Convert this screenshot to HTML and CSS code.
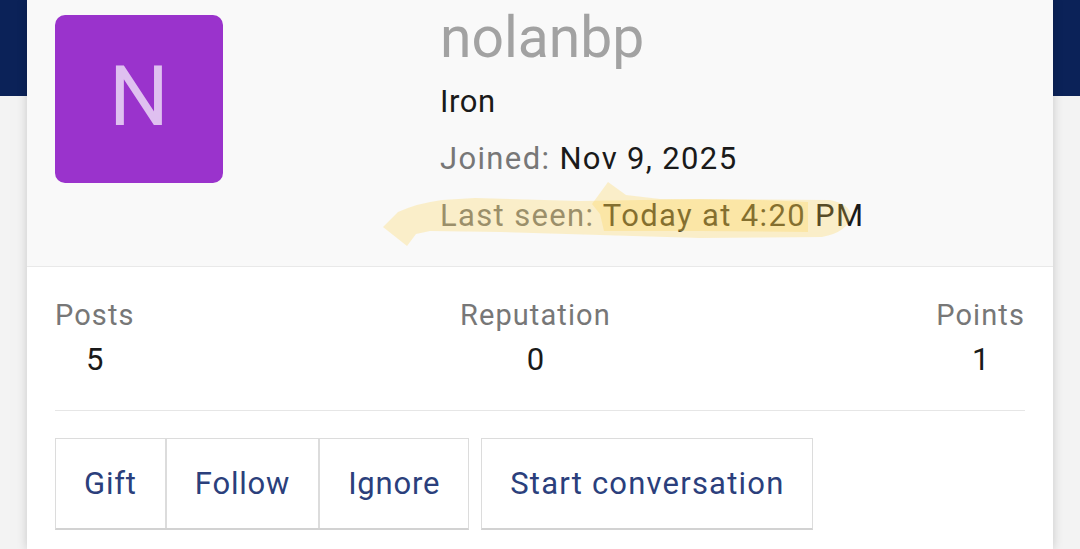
FILE: index.html
```html
<!DOCTYPE html>
<html lang="en">
<head>
<meta charset="utf-8">
<title>nolanbp</title>
<link rel="stylesheet" href="styles.css">
</head>
<body>
<div class="page">
  <div class="card">
    <div class="head">
      <div class="avatar">N</div>
      <div class="info">
        <div class="username">nolanbp</div>
        <div class="line title">Iron</div>
        <div class="line"><span class="label">Joined:</span> <span class="value">Nov 9, 2025</span></div>
        <div class="line"><span class="label">Last seen:</span> <span class="value">Today at 4:20 PM</span></div>
      </div>
    </div>
    <div class="body">
      <div class="stats">
        <div class="stat"><div class="stat-label">Posts</div><div class="stat-value">5</div></div>
        <div class="stat"><div class="stat-label">Reputation</div><div class="stat-value">0</div></div>
        <div class="stat"><div class="stat-label">Points</div><div class="stat-value">1</div></div>
      </div>
      <div class="actions">
        <div class="group">
          <a class="btn">Gift</a>
          <a class="btn">Follow</a>
          <a class="btn">Ignore</a>
        </div>
        <div class="group">
          <a class="btn btn-wide">Start conversation</a>
        </div>
      </div>
    </div>
  </div>
  <svg class="marker" width="1080" height="549" viewBox="0 0 1080 549" aria-hidden="true">
    <path d="M383,227 L398,212 Q418,203 442,200 L475,198 L580,201 L700,199 L830,200 Q850,204 851,216 Q848,232 822,237 L700,238 L600,235 L500,232 L430,231 L416,234 L407,246 Z"/>
    <path d="M608,182 L626,195 L660,199 L760,200 L808,202 L808,232 L700,231 L604,231 L600,214 L592,204 Z"/>
  </svg>
</div>
</body>
</html>
```
FILE: styles.css
```css
html, body {
  margin: 0;
  padding: 0;
}
body {
  width: 1080px;
  height: 549px;
  overflow: hidden;
  font-family: Roboto, "Liberation Sans", sans-serif;
  background: linear-gradient(#0b2258 0, #0b2258 96px, #f3f3f3 96px, #f3f3f3 100%);
}
.page {
  position: relative;
  height: 549px;
}
.card {
  margin: 0 27px;
  height: 549px;
  background: #ffffff;
  box-shadow: 0 0 10px rgba(0, 0, 0, 0.18);
}
.head {
  display: grid;
  grid-template-columns: 168px 1fr;
  column-gap: 217px;
  padding: 0 28px 22px 28px;
  background: #f9f9f9;
  border-bottom: 1px solid #e9e9e9;
}
.avatar {
  margin-top: 15px;
  width: 168px;
  height: 168px;
  border-radius: 10px;
  background: #9a33cc;
  color: #dfc0f0;
  font-size: 84px;
  line-height: 164px;
  text-align: center;
}
.info {
  padding-top: 3px;
}
.username {
  font-size: 57px;
  line-height: 70px;
  color: #a2a2a2;
}
.line {
  font-size: 31px;
  line-height: 57px;
  letter-spacing: 1.35px;
  color: #1a1a1a;
}
.title {
  letter-spacing: 0.6px;
}
.label {
  color: #777777;
}
.value {
  color: #1a1a1a;
}
.body {
  padding: 0 28px;
}
.stats {
  display: flex;
  justify-content: space-between;
  padding: 28px 0 25px;
  border-bottom: 1px solid #e6e6e6;
}
.stat {
  text-align: center;
}
.stat-label {
  font-size: 29px;
  line-height: 40px;
  letter-spacing: 1.1px;
  color: #777777;
}
.stat-value {
  font-size: 31px;
  line-height: 50px;
  color: #1a1a1a;
}
.actions {
  display: flex;
  gap: 12px;
  margin-top: 27px;
}
.group {
  display: flex;
  border: 1px solid #dcdcdc;
  border-bottom: 2px solid #d2d2d2;
  background: #ffffff;
}
.btn {
  display: flex;
  align-items: center;
  height: 89px;
  padding: 0 28px;
  font-size: 31px;
  letter-spacing: 0.8px;
  color: #2b3f7c;
}
.btn-wide {
  letter-spacing: 1.2px;
}
.btn + .btn {
  border-left: 2px solid #dcdcdc;
}
.marker {
  position: absolute;
  left: 0;
  top: 0;
  pointer-events: none;
}
.marker path {
  fill: #ffd24a;
  fill-opacity: 0.27;
}
```
